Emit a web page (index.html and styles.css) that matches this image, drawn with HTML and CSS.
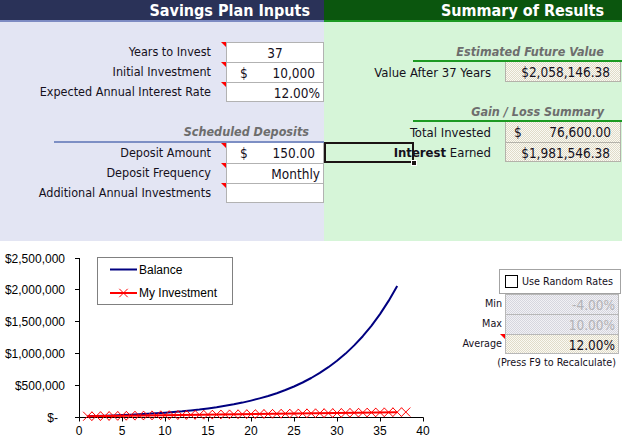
FILE: index.html
```html
<!DOCTYPE html>
<html>
<head>
<meta charset="utf-8">
<title>Savings Plan</title>
<link rel="stylesheet" href="styles.css">
</head>
<body>
<div class="sheet">
  <div class="top">
    <section class="panel inputs">
      <div class="hdr">Savings Plan Inputs</div>
      <div class="pbody">
        <div class="grid">
          <div class="lbl note">Years to Invest</div>
          <div class="cell center">37</div>
          <div class="lbl note">Initial Investment</div>
          <div class="cell acct"><span>$</span><span>10,000</span></div>
          <div class="lbl note">Expected Annual Interest Rate</div>
          <div class="cell last">12.00%</div>
        </div>
        <div class="subhead">Scheduled Deposits</div>
        <div class="grid">
          <div class="lbl note">Deposit Amount</div>
          <div class="cell acct notop"><span>$</span><span>150.00</span></div>
          <div class="lbl note">Deposit Frequency</div>
          <div class="cell">Monthly</div>
          <div class="lbl note">Additional Annual Investments</div>
          <div class="cell last"></div>
        </div>
      </div>
    </section>
    <section class="panel results">
      <div class="hdr">Summary of Results</div>
      <div class="pbody">
        <div class="subhead">Estimated Future Value</div>
        <div class="grid">
          <div class="lbl">Value After 37 Years</div>
          <div class="cell res notop last">$2,058,146.38</div>
        </div>
        <div class="subhead">Gain / Loss Summary</div>
        <div class="grid">
          <div class="lbl">Total Invested</div>
          <div class="cell res acct notop"><span>$</span><span>76,600.00</span></div>
          <div class="lbl"><b>Interest</b> Earned</div>
          <div class="cell res last">$1,981,546.38</div>
        </div>
      </div>
      <div class="selected"><span class="handle"></span></div>
    </section>
  </div>
  <div class="bottom">
    <svg class="chart" width="460" height="199" viewBox="0 241 460 199" xmlns="http://www.w3.org/2000/svg">
      <path class="axis" d="M79.5 258V417.5H423.5M75 258.5h4.5M75 289.5h4.5M75 321.5h4.5M75 353.5h4.5M75 385.5h4.5M75 417.5h4.5M122.5 417.5v4M165.5 417.5v4M208.5 417.5v4M251.5 417.5v4M294.5 417.5v4M337.5 417.5v4M380.5 417.5v4M423.5 417.5v4M79.5 417.5v4"/>
      <g class="ylab">
        <text x="65" y="262.5">$2,500,000</text>
        <text x="65" y="293.5">$2,000,000</text>
        <text x="65" y="325.5">$1,500,000</text>
        <text x="65" y="357.5">$1,000,000</text>
        <text x="65" y="389.5">$500,000</text>
        <text x="58" y="421.5">$-</text>
      </g>
      <g class="xlab">
        <text x="79" y="434.5">0</text>
        <text x="122" y="434.5">5</text>
        <text x="165" y="434.5">10</text>
        <text x="208" y="434.5">15</text>
        <text x="251" y="434.5">20</text>
        <text x="294" y="434.5">25</text>
        <text x="337" y="434.5">30</text>
        <text x="380" y="434.5">35</text>
        <text x="423" y="434.5">40</text>
      </g>
      <polyline class="bal" points="87.6,416.2 96.2,415.9 104.8,415.7 113.4,415.4 122,415.1 130.6,414.7 139.2,414.3 147.8,413.8 156.4,413.3 165,412.7 173.6,412 182.2,411.3 190.8,410.4 199.4,409.5 208,408.4 216.6,407.2 225.2,405.8 233.8,404.3 242.4,402.6 251,400.6 259.6,398.4 268.2,396 276.8,393.2 285.4,390 294,386.5 302.6,382.5 311.2,378 319.8,372.9 328.4,367.2 337,360.8 345.6,353.6 354.2,345.4 362.8,336.2 371.4,325.8 380,314.1 388.6,300.9 397.2,286.1"/>
      <path class="inv" d="M87.6 416.25L397.2 412.13"/>
      <path class="mk" d="M83.1 411.75l9 9m0-9l-9 9m8.6-9.114l9 9m0-9l-9 9m8.6-9.114l9 9m0-9l-9 9m8.6-9.114l9 9m0-9l-9 9m8.6-9.114l9 9m0-9l-9 9m8.6-9.114l9 9m0-9l-9 9m8.6-9.114l9 9m0-9l-9 9m8.6-9.114l9 9m0-9l-9 9m8.6-9.114l9 9m0-9l-9 9m8.6-9.114l9 9m0-9l-9 9m8.6-9.114l9 9m0-9l-9 9m8.6-9.114l9 9m0-9l-9 9m8.6-9.114l9 9m0-9l-9 9m8.6-9.114l9 9m0-9l-9 9m8.6-9.114l9 9m0-9l-9 9m8.6-9.114l9 9m0-9l-9 9m8.6-9.114l9 9m0-9l-9 9m8.6-9.114l9 9m0-9l-9 9m8.6-9.114l9 9m0-9l-9 9m8.6-9.114l9 9m0-9l-9 9m8.6-9.114l9 9m0-9l-9 9m8.6-9.114l9 9m0-9l-9 9m8.6-9.114l9 9m0-9l-9 9m8.6-9.114l9 9m0-9l-9 9m8.6-9.114l9 9m0-9l-9 9m8.6-9.114l9 9m0-9l-9 9m8.6-9.114l9 9m0-9l-9 9m8.6-9.114l9 9m0-9l-9 9m8.6-9.114l9 9m0-9l-9 9m8.6-9.114l9 9m0-9l-9 9m8.6-9.114l9 9m0-9l-9 9m8.6-9.114l9 9m0-9l-9 9m8.6-9.114l9 9m0-9l-9 9m8.6-9.114l9 9m0-9l-9 9m8.6-9.114l9 9m0-9l-9 9m8.6-9.114l9 9m0-9l-9 9m8.6-9.114l9 9m0-9l-9 9m8.6-9.114l9 9m0-9l-9 9"/>
      <rect class="legend" x="97.5" y="257.5" width="135" height="47"/>
      <path class="bal" d="M110 269.5H137"/>
      <path class="inv" d="M110 293H137"/>
      <path class="mk" d="M119.3 288.8l8.4 8.4m0-8.4l-8.4 8.4"/>
      <text class="ltxt" x="139" y="273.5">Balance</text>
      <text class="ltxt" x="139" y="297">My Investment</text>
    </svg>
    <div class="random">
      <div class="rbox"><span class="check"></span><span>Use Random Rates</span></div>
      <div class="rgrid">
        <div class="rlbl">Min</div>
        <div class="rcell off">-4.00%</div>
        <div class="rlbl">Max</div>
        <div class="rcell off">10.00%</div>
        <div class="rlbl note">Average</div>
        <div class="rcell avg">12.00%</div>
      </div>
      <div class="press">(Press F9 to Recalculate)</div>
    </div>
  </div>
</div>
</body>
</html>
```

FILE: styles.css
```css
* { box-sizing: border-box; margin: 0; padding: 0; }
html, body { width: 622px; height: 440px; overflow: hidden; background: #fff; }
body {
  font-family: "DejaVu Sans Condensed", "DejaVu Sans", sans-serif;
  font-stretch: condensed;
  font-size: 12.5px;
  color: #15101c;
}
.sheet { width: 622px; height: 440px; display: flex; flex-direction: column; }
.top { display: flex; height: 241px; }
.panel { display: flex; flex-direction: column; position: relative; }
.inputs { width: 324px; background: #e3e5f3; }
.results { width: 298px; background: #d6f5d8; }

.hdr {
  height: 22px;
  padding: 1px 14px 0 0;
  font-weight: bold;
  font-size: 16px;
  line-height: 19px;
  color: #fff;
  text-align: right;
  border-bottom: 2px solid;
  white-space: nowrap;
}
.inputs .hdr { background: #2a3258; border-color: #7d8bc2; }
.results .hdr { background: #0b560e; border-color: #1c9a22; padding-right: 18px; }

.pbody { flex: 1; }
.inputs .pbody { padding-top: 20px; }

.grid { display: grid; grid-auto-rows: 20px; }
.inputs .grid { grid-template-columns: 226px 98px; }
.results .grid { grid-template-columns: 181px 116px; }

.lbl {
  position: relative;
  text-align: right;
  padding-right: 15px;
  line-height: 20px;
  white-space: nowrap;
}
.results .lbl { padding: 2px 14px 0 0; line-height: 18px; font-size: 13px; }
.note::after {
  content: "";
  position: absolute;
  top: 0;
  right: 0;
  border-top: 5px solid #f00;
  border-left: 5px solid transparent;
}

.cell {
  background: #fff;
  border: 1px solid #b2b2b2;
  border-bottom: 0;
  font-size: 13.5px;
  padding: 1px 3px 0 0;
  line-height: 19px;
  white-space: nowrap;
  display: flex;
  justify-content: flex-end;
  overflow: visible;
}
.cell.last { border-bottom: 1px solid #b2b2b2; }
.cell.notop { border-top: 0; }
.cell.center { justify-content: center; padding-right: 0; }
.cell.acct { justify-content: space-between; padding-left: 13px; padding-right: 8px; }
.cell.res {
  background: #f2efe4 repeating-conic-gradient(#e0dbc8 0 25%, #faf9f3 0 50%) 0 0 / 2px 2px;
  border-color: #b4b2aa;
  padding-right: 10px;
  padding-top: 1px;
}
.cell.res.acct { padding-left: 8px; padding-right: 9px; }

.subhead {
  font-weight: bold;
  font-style: italic;
  font-size: 12.5px;
  color: #6d6d6d;
  text-align: right;
  line-height: 16px;
  border-bottom: 2px solid;
  white-space: nowrap;
}
.inputs .subhead { height: 41px; margin-left: 54px; padding: 22px 15px 1px 0; border-color: #7d8fc4; }
.results .subhead { height: 40px; margin-left: 89px; padding: 22px 18px 0 0; border-color: #1c9a22; }

.selected {
  position: absolute;
  left: 0;
  top: 142px;
  width: 90px;
  height: 21px;
  border: 2px solid #1c1414;
}
.handle {
  position: absolute;
  right: -5px;
  bottom: -5px;
  width: 6px;
  height: 6px;
  background: #1c1414;
  border: 1px solid #fff;
}

.bottom { display: flex; height: 199px; }
.chart { display: block; width: 460px; height: 199px; }
.chart text { font-family: "Liberation Sans", Arial, sans-serif; font-size: 12px; fill: #000; }
.ylab text { text-anchor: end; }
.xlab text { text-anchor: middle; }
.axis { fill: none; stroke: #000; stroke-width: 1; }
.bal { fill: none; stroke: #000080; stroke-width: 2; stroke-linejoin: round; }
.inv { fill: none; stroke: #ff0000; stroke-width: 2; }
.mk { fill: none; stroke: #ff0000; stroke-width: 1; }
.legend { fill: #fff; stroke: #808080; stroke-width: 1; }

.random { width: 162px; padding-top: 28px; display: flex; flex-direction: column; }
.rbox {
  margin-left: 39px;
  width: 122px;
  height: 25px;
  border: 1px solid #a3a3a3;
  background: #fff;
  display: flex;
  align-items: center;
  padding-left: 5px;
  gap: 4px;
  font-size: 10.7px;
  white-space: nowrap;
}
.check { width: 13px; height: 13px; border: 1px solid #000; background: #fff; }
.rgrid { display: grid; grid-template-columns: 45px 114px; grid-auto-rows: 20px; }
.rlbl {
  position: relative;
  font-size: 10.7px;
  text-align: right;
  padding-right: 3px;
  line-height: 20px;
}
.rcell {
  border: 1px solid #b8b8b8;
  border-bottom: 0;
  font-size: 13.5px;
  line-height: 19px;
  padding: 1px 3px 0 0;
  text-align: right;
}
.rcell.off {
  color: #b2b2b6;
  background: #e6e6ec repeating-conic-gradient(#d6d6de 0 25%, #f1f1f5 0 50%) 0 0 / 2px 2px;
}
.rcell.off:first-of-type { border-top: 0; }
.rcell.avg {
  border-bottom: 1px solid #b8b8b8;
  background: #f2efe4 repeating-conic-gradient(#e0dbc8 0 25%, #faf9f3 0 50%) 0 0 / 2px 2px;
}
.press { font-size: 10.7px; text-align: right; padding-right: 6px; line-height: 16px; margin-top: 1px; white-space: nowrap; }
```
